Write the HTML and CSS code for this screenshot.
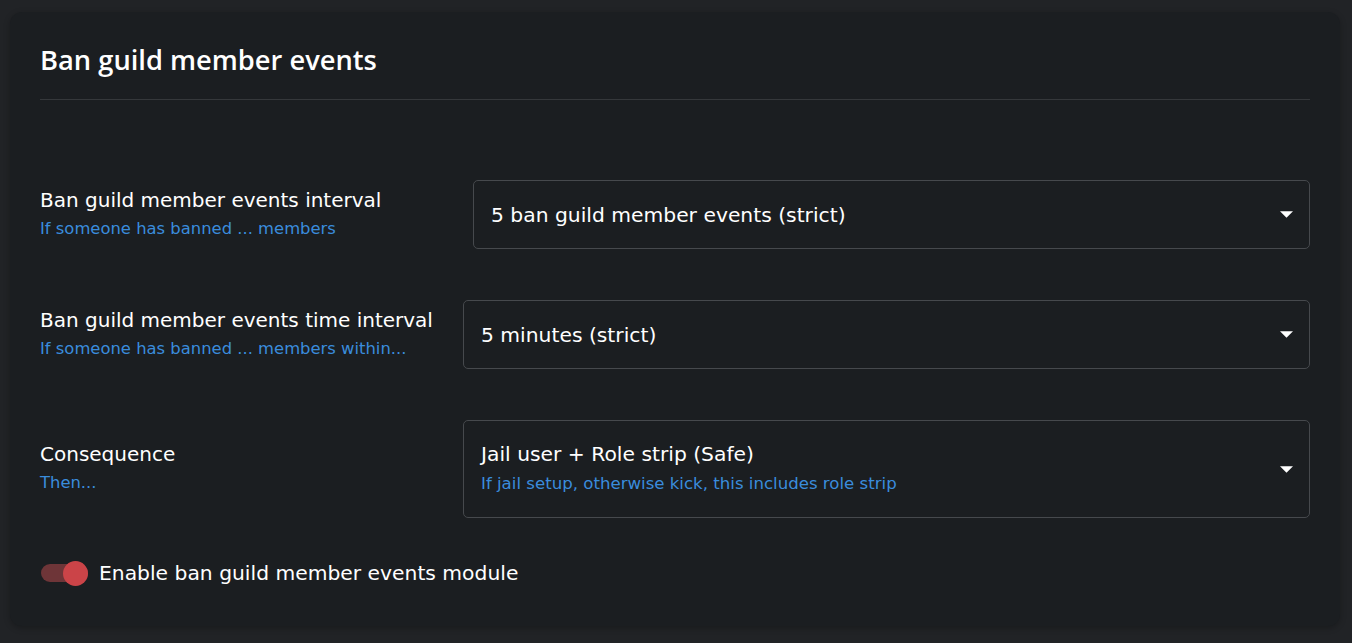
FILE: index.html
```html
<!DOCTYPE html>
<html lang="en">
<head>
  <meta charset="UTF-8">
  <title>Ban guild member events</title>
  <meta name="viewport" content="width=device-width, initial-scale=1">
  <link rel="stylesheet" href="styles.css">
</head>
<body>
<main class="page">
  <section class="card">
    <h2 class="card-title">Ban guild member events</h2>
    <hr class="divider">

    <div class="fields">
      <div class="field">
        <div class="field-label field-label--wide">
          <div class="label">Ban guild member events interval</div>
          <div class="hint">If someone has banned ... members</div>
        </div>
        <div class="select">
          <div class="select-value">
            <div class="select-text">5 ban guild member events (strict)</div>
          </div>
          <svg class="select-arrow" viewBox="0 0 14 7"><polygon points="0,0 14,0 7,7" /></svg>
        </div>
      </div>

      <div class="field">
        <div class="field-label">
          <div class="label">Ban guild member events time interval</div>
          <div class="hint">If someone has banned ... members within...</div>
        </div>
        <div class="select">
          <div class="select-value">
            <div class="select-text">5 minutes (strict)</div>
          </div>
          <svg class="select-arrow" viewBox="0 0 14 7"><polygon points="0,0 14,0 7,7" /></svg>
        </div>
      </div>

      <div class="field">
        <div class="field-label">
          <div class="label">Consequence</div>
          <div class="hint">Then...</div>
        </div>
        <div class="select select--tall">
          <div class="select-value">
            <div class="select-text">Jail user + Role strip (Safe)</div>
            <div class="hint hint--option">If jail setup, otherwise kick, this includes role strip</div>
          </div>
          <svg class="select-arrow" viewBox="0 0 14 7"><polygon points="0,0 14,0 7,7" /></svg>
        </div>
      </div>
    </div>

    <label class="switch">
      <span class="switch-track"><span class="switch-thumb"></span></span>
      <span class="switch-label">Enable ban guild member events module</span>
    </label>
  </section>
</main>
</body>
</html>
```

FILE: styles.css
```css
*, *::before, *::after {
  box-sizing: border-box;
  margin: 0;
  padding: 0;
}

body {
  --bg: #212326;
  --card: #1b1e21;
  --line: #46494d;
  --blue: #3a8cdc;
  background: var(--bg);
  color: #fff;
  font-family: "DejaVu Sans", "Open Sans", sans-serif;
  height: 100vh;
  overflow: hidden;
}

.page {
  padding: 12px 12px 16px 10px;
}

.card {
  background: var(--card);
  border-radius: 12px;
  height: 614px;
  padding: 29px 30px 0 30px;
  box-shadow: 0 2px 6px rgba(0, 0, 0, .25);
}

.card-title {
  font-family: "Open Sans", "DejaVu Sans", sans-serif;
  font-size: 27.3px;
  font-weight: 600;
  line-height: 38px;
}

.divider {
  border: 0;
  border-top: 1px solid #35383b;
  margin-top: 20px;
}

.fields {
  display: flex;
  flex-direction: column;
  gap: 51px;
  margin-top: 80px;
}

.field {
  display: flex;
  align-items: center;
  gap: 29px;
}

.field-label {
  flex: 0 0 auto;
  min-width: 394px;
}
.field-label--wide {
  min-width: 404px;
}

.label {
  font-size: 20px;
  line-height: 28px;
}

.hint {
  color: var(--blue);
  font-size: 16.4px;
  line-height: 30px;
}
.hint--option {
  font-size: 16.6px;
}

.select {
  flex: 1;
  display: flex;
  align-items: center;
  height: 69px;
  border: 1px solid var(--line);
  border-radius: 5px;
  padding: 0 17px;
}
.select--tall {
  height: 98px;
}

.select-value {
  flex: 1;
}

.select-text {
  font-size: 20.3px;
  line-height: 30px;
}

.select-arrow {
  width: 13px;
  height: 7px;
  fill: #fff;
  margin-right: -1px;
}

.switch {
  display: flex;
  align-items: center;
  gap: 11px;
  margin-top: 40px;
  margin-left: 1px;
}

.switch-track {
  position: relative;
  width: 47px;
  height: 18px;
  border-radius: 9px;
  background: #6e3538;
}

.switch-thumb {
  position: absolute;
  right: 0;
  top: -3.5px;
  width: 25px;
  height: 25px;
  border-radius: 50%;
  background: #cb4448;
}

.switch-label {
  font-size: 20.3px;
  line-height: 30px;
}
```
